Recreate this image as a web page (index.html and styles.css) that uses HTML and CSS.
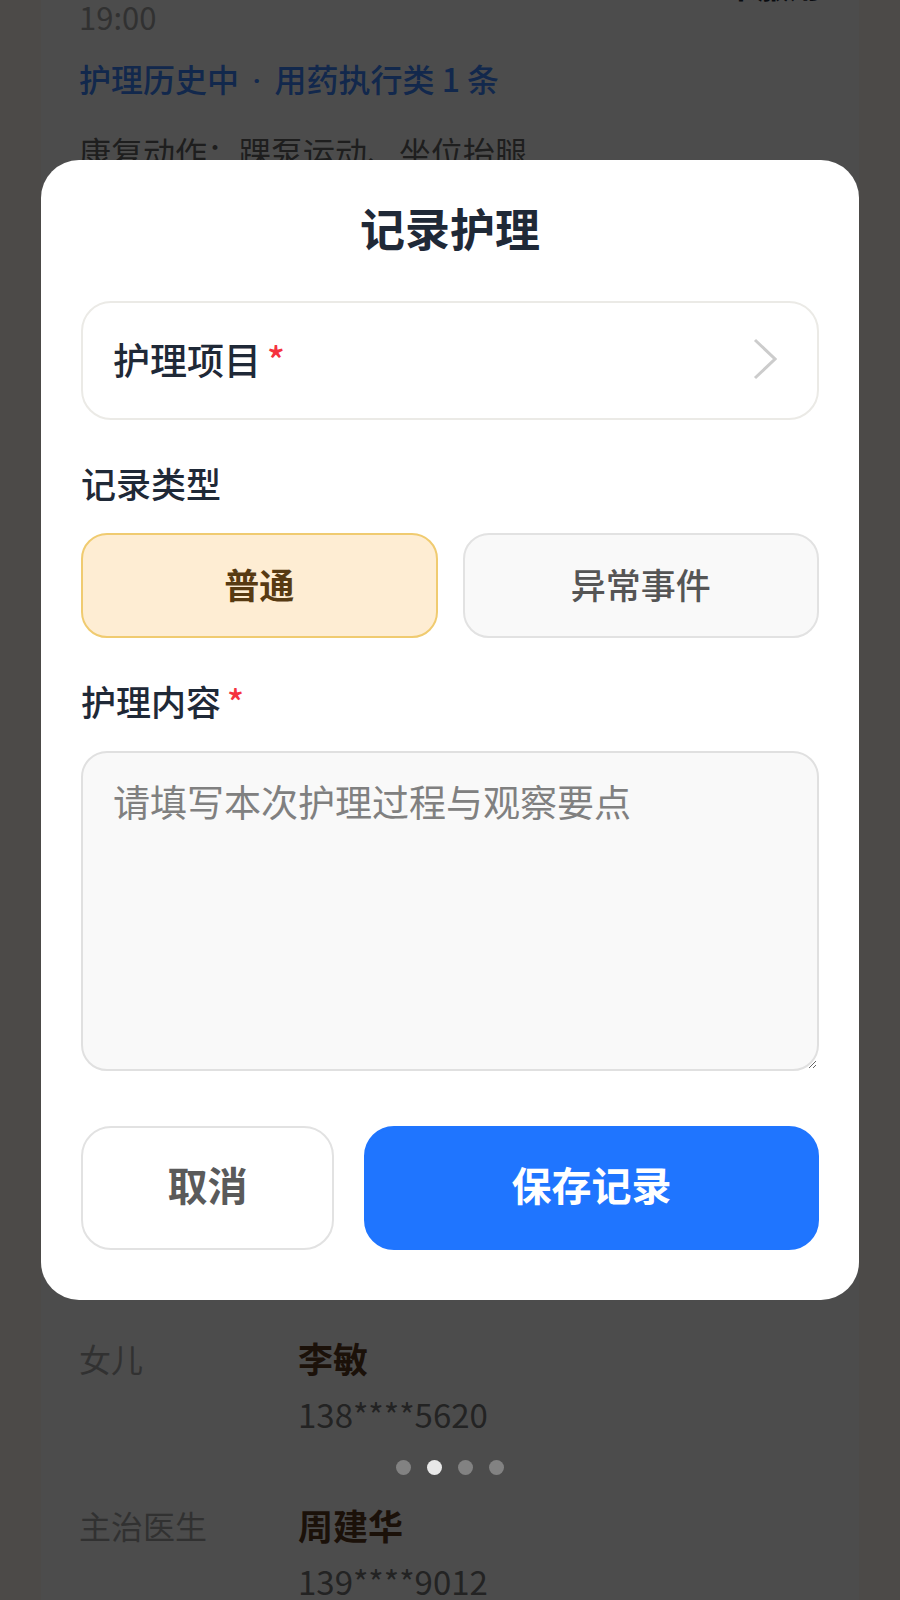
FILE: index.html
```html
<!DOCTYPE html>
<html lang="zh-CN">

<head>
    <meta charset="UTF-8">
    <meta name="viewport" content="width=device-width, initial-scale=1.0">
    <title>记录护理</title>
    <link rel="stylesheet" href="styles.css">
</head>

<body>
    <!-- Patient page behind the dialog -->
    <main class="page">
        <section class="plan">
            <p class="plan-status">未服用</p>
            <p class="plan-time">19:00</p>
            <a class="plan-link" href="#history">护理历史中 <span class="dot">·</span> 用药执行类 1 条</a>
            <p class="plan-action">康复动作：踝泵运动、坐位抬腿</p>
        </section>

        <dl class="contacts">
            <div class="contact">
                <dt>女儿</dt>
                <dd>
                    <strong>李敏</strong>
                    <span>138****5620</span>
                </dd>
            </div>
            <div class="contact">
                <dt>主治医生</dt>
                <dd>
                    <strong>周建华</strong>
                    <span>139****9012</span>
                </dd>
            </div>
        </dl>
    </main>

    <!-- Record dialog -->
    <div class="overlay">
        <form class="modal" role="dialog" aria-labelledby="modal-title">
            <h1 id="modal-title">记录护理</h1>

            <button type="button" class="picker">
                <span>护理项目<span class="required">*</span></span>
                <svg class="chevron" viewBox="0 0 24 42" aria-hidden="true">
                    <path d="M2 2 L22 21 L2 40" />
                </svg>
            </button>

            <div class="field" role="group" aria-labelledby="type-label">
                <div class="label" id="type-label">记录类型</div>
                <div class="types">
                    <button type="button" class="type active" aria-pressed="true">普通</button>
                    <button type="button" class="type" aria-pressed="false">异常事件</button>
                </div>
            </div>

            <div class="field">
                <label class="label" for="content">护理内容<span class="required">*</span></label>
                <textarea id="content" placeholder="请填写本次护理过程与观察要点" required></textarea>
            </div>

            <div class="actions">
                <button type="button" class="btn cancel">取消</button>
                <button type="submit" class="btn save">保存记录</button>
            </div>
        </form>
    </div>

    <!-- Carousel dots -->
    <div class="dots">
        <span></span>
        <span class="current"></span>
        <span></span>
        <span></span>
    </div>
</body>

</html>
```

FILE: styles.css
```css
* {
    box-sizing: border-box;
}

body {
    margin: 0;
    height: 100vh;
    overflow: hidden;
    background-color: #fff9f0;
    color: #1f2937;
    font-family: "Noto Sans CJK SC", sans-serif;
    font-size: 32px;
}

button,
textarea {
    font-family: inherit;
}

p,
dl,
dd {
    margin: 0;
}

/* Page, scrolled part of the way down */
.page {
    margin: -32px 41px 0;
    padding: 0 38px;
    background-color: #fff;
}

.plan {
    display: flex;
    flex-direction: column;
    min-height: 1362px;
}

.plan-status {
    align-self: flex-end;
    line-height: 32px;
    font-weight: bold;
}

.plan-time {
    line-height: 34px;
    color: #a6a6a6;
    font-size: 31px;
}

.plan-link {
    margin-top: 20px;
    line-height: 48px;
    color: #3f86ff;
    font-weight: 500;
    text-decoration: none;
}

.plan-link .dot {
    margin: 0 6px;
    font-family: Roboto, sans-serif;
}

.plan-action {
    margin-top: 22px;
    line-height: 48px;
    color: #666;
}

.contact {
    display: flex;
    margin-bottom: 55px;
    line-height: 56px;
}

.contact dt {
    width: 219px;
    color: #a6a6a6;
}

.contact strong {
    display: block;
    font-size: 35px;
    color: #5c3a1e;
}

.contact span {
    display: block;
    font-size: 33px;
    color: #777;
}

/* Dialog */
.overlay {
    position: fixed;
    inset: 0;
    padding: 160px 41px 0;
    background-color: rgba(0, 0, 0, 0.7);
}

.modal {
    padding: 40px 40px 50px;
    background-color: #fff;
    border-radius: 38px;
}

.modal h1 {
    margin: 0 0 45px;
    font-size: 45px;
    line-height: 56px;
    text-align: center;
}

.picker {
    display: flex;
    align-items: center;
    justify-content: space-between;
    width: 100%;
    height: 119px;
    padding: 0 40px 4px 30px;
    background-color: #fff;
    border: 2px solid #ebeae6;
    border-radius: 30px;
    color: inherit;
    font-size: 37px;
    font-weight: 500;
    cursor: pointer;
}

.required {
    margin-left: 6px;
    color: #f5333f;
}

.chevron {
    width: 24px;
    height: 42px;
    fill: none;
    stroke: #ccc;
    stroke-width: 3;
}

.field {
    margin-top: 38px;
}

.label {
    display: block;
    margin-bottom: 25px;
    font-size: 35px;
    font-weight: 500;
    line-height: 50px;
}

.types {
    display: grid;
    grid-template-columns: 1fr 1fr;
    gap: 25px;
}

.type {
    height: 105px;
    padding: 0 0 4px;
    background-color: #f9f9f9;
    border: 2px solid #e2e2e2;
    border-radius: 26px;
    color: #555;
    font-size: 35px;
    font-weight: 500;
    cursor: pointer;
}

.type.active {
    background-color: #feedd3;
    border-color: #f0cb70;
    color: #573a12;
    font-weight: bold;
}

textarea {
    display: block;
    width: 100%;
    height: 320px;
    padding: 20px 30px;
    background-color: #f9f9f9;
    border: 2px solid #e0e0e0;
    border-radius: 26px;
    color: inherit;
    font-size: 37px;
    line-height: 56px;
}

textarea::placeholder {
    color: #808080;
}

.actions {
    display: grid;
    grid-template-columns: 5fr 9fr;
    gap: 30px;
    margin-top: 55px;
}

.btn {
    height: 124px;
    padding: 0 0 8px;
    border: 2px solid #e2e2e2;
    border-radius: 30px;
    background-color: #fff;
    color: #5a5a5a;
    font-size: 40px;
    font-weight: bold;
    cursor: pointer;
}

.btn.save {
    background-color: #1f75ff;
    border-color: #1f75ff;
    color: #fff;
}

/* Carousel dots */
.dots {
    position: fixed;
    right: 0;
    bottom: 125px;
    left: 0;
    display: flex;
    justify-content: center;
    gap: 16px;
}

.dots span {
    width: 15px;
    height: 15px;
    border-radius: 50%;
    background-color: #828282;
}

.dots .current {
    background-color: #e8e8e8;
}
```
